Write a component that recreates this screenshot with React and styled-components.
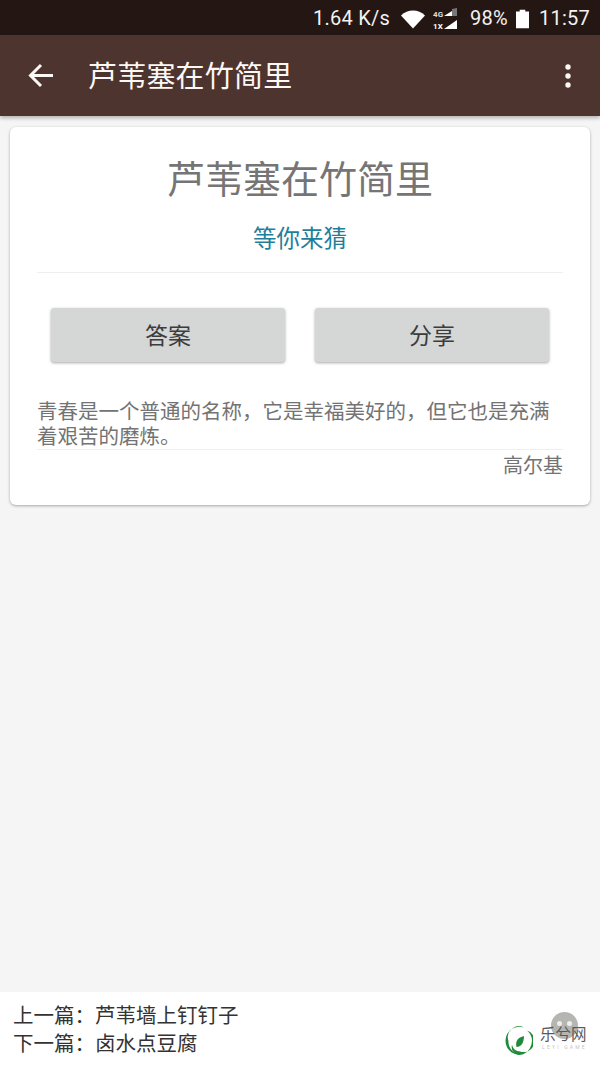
import React from "react";
import styled, { createGlobalStyle } from "styled-components";

const Global = createGlobalStyle`
  html, body { margin: 0; padding: 0; background: #f5f5f5; }
  * { box-sizing: border-box; }
  body { font-family: "Noto Sans CJK SC", "Noto Sans", Roboto, sans-serif; }
`;
const Page = styled.div`
  width: 600px; height: 1067px; display: flex; flex-direction: column; overflow: hidden; background: #f5f5f5;
`;
const StatusBar = styled.div`
  height: 35px; flex: none; background: #241713; color: #f4f1f0;
  display: flex; align-items: center; justify-content: flex-end; padding: 2px 10px 0 0;
  font-family: Roboto, sans-serif; font-size: 20px; letter-spacing: 0.25px;
`;
const StatusText = styled.span`
  margin-right: ${p => p.$gap || 0}px; line-height: 33px;
`;
const StatusIcon = styled.svg`
  display: block; flex: none; margin-right: ${p => p.$gap || 0}px;
`;
const AppBar = styled.header`
  height: 81px; flex: none; background: #4e342e; color: #fbf8f6;
  display: flex; align-items: center; padding: 0 29px 0 28px;
  box-shadow: 0 2px 4px rgba(0,0,0,.28);
  position: relative; z-index: 1;
`;
const BarTitle = styled.h1`
  margin: -4px 0 0 33px; flex: 1; font-size: 29px; font-weight: 400; line-height: 40px; letter-spacing: .2px;
`;
const Main = styled.main`
  flex: 1; padding: 11px 10px 0;
`;
const Card = styled.section`
  height: 378px; background: #fff; border-radius: 6px; box-shadow: 0 1px 3px rgba(0,0,0,.32);
  padding: 23px 27px 0; display: flex; flex-direction: column;
`;
const Title = styled.h2`
  margin: 0; height: 54px; text-align: center; font-size: 38px; line-height: 54px; font-weight: 400; color: #757575;
`;
const Subtitle = styled.div`
  margin-top: 8px; text-align: center; font-size: 23.5px; line-height: 50px; height: 60px; color: #1f7f9b;
`;
const Rule = styled.div`
  height: 1px; flex: none; background: #efefef;
`;
const Buttons = styled.div`
  display: flex; justify-content: space-between; padding: 0 14px; margin-top: 35px;
`;
const Button = styled.button`
  width: 234px; height: 54px; border: 0; border-radius: 3px; background: #d5d6d6; color: #3c3c3c;
  box-shadow: 0 1px 3px rgba(0,0,0,.35); font: inherit; font-size: 23px; padding: 0 0 3px;
`;
const Quote = styled.p`
  margin: 36px 0 0; font-size: 20.5px; line-height: 25px; height: 51px; color: #737373;
`;
const Author = styled.div`
  margin-top: 1px; text-align: right; font-size: 20px; line-height: 28px; color: #737373;
`;
const Footer = styled.footer`
  height: 75px; flex: none; background: #fff; padding: 8px 13px 0; position: relative;
`;
const FooterLine = styled.div`
  font-size: 20.5px; line-height: 28px; color: #333;
`;
const Logo = styled.div`
  position: absolute; left: 503px; top: 0; width: 97px; height: 75px;
`;
const LogoMark = styled.svg`
  position: absolute; left: 0; top: 34px;
`;
const LogoName = styled.div`
  position: absolute; left: 37px; top: 31px; font-size: 15.500px; line-height: 20px; color: #5a5a5a; white-space: nowrap;
`;
const LogoSub = styled.div`
  position: absolute; left: 39px; top: 52px; font-family: Roboto, sans-serif; font-size: 5px; line-height: 7px; color: #c4c4c4; letter-spacing: 2.200px; white-space: nowrap;
`;
const Ghost = styled.div`
  position: absolute; left: 48px; top: 20px; width: 27px; height: 27px; border-radius: 50%;
  background: rgba(120,120,115,.55);
`;
const GhostEye = styled.i`
  position: absolute; top: 9px; left: ${p => p.$x}px; width: 5px; height: 5px; border-radius: 50%; background: #eee;
`;

export default function App() {
  return (
    <Page>
      <Global />
      <StatusBar>
        <StatusText $gap={10}>1.64 K/s</StatusText>
        <StatusIcon $gap={7} width="26" height="20" viewBox="0 0 26 20">
          <path d="M1 6.500C4.500 3 8.500 1.500 13 1.500S21.500 3 25 6.500L13 19.500Z" fill="#fff" />
        </StatusIcon>
        <StatusIcon $gap={12} width="25" height="22" viewBox="0 0 25 22">
          <text x="0" y="9" fontSize="8" fontWeight="700" fill="#ddd" fontFamily="Roboto">4G</text>
          <text x="0" y="21" fontSize="8" fontWeight="700" fill="#fff" fontFamily="Roboto">1X</text>
          <path d="M11 8 19 3V8Z" fill="#fff" />
          <path d="M19 1 24 0V8H19Z" fill="#777" />
          <path d="M11 21 24 12V21Z" fill="#fff" />
        </StatusIcon>
        <StatusText $gap={8}>98%</StatusText>
        <StatusIcon $gap={10} width="13" height="20" viewBox="0 0 14 20">
          <path d="M4 0h6v2h4v18H0V2h4Z" fill="#fff" />
        </StatusIcon>
        <StatusText>11:57</StatusText>
      </StatusBar>
      <AppBar>
        <svg width="27" height="27" viewBox="0 0 27 27" fill="none" stroke="#fbf8f6" strokeWidth="3">
          <path d="M25 13.500H3M13 3 2.500 13.500 13 24" />
        </svg>
        <BarTitle>芦苇塞在竹简里</BarTitle>
        <svg width="6" height="24" viewBox="0 0 6 24" fill="#fbf8f6">
          <circle cx="3" cy="3" r="2.700" />
          <circle cx="3" cy="12" r="2.700" />
          <circle cx="3" cy="21" r="2.700" />
        </svg>
      </AppBar>
      <Main>
        <Card>
          <Title>芦苇塞在竹简里</Title>
          <Subtitle>等你来猜</Subtitle>
          <Rule />
          <Buttons>
            <Button>答案</Button>
            <Button>分享</Button>
          </Buttons>
          <Quote>青春是一个普通的名称，它是幸福美好的，但它也是充满着艰苦的磨炼。</Quote>
          <Rule />
          <Author>高尔基</Author>
        </Card>
      </Main>
      <Footer>
        <FooterLine>上一篇：芦苇墙上钉钉子</FooterLine>
        <FooterLine>下一篇：卤水点豆腐</FooterLine>
        <Logo>
          <Ghost><GhostEye $x={6} /><GhostEye $x={16} /></Ghost>
          <LogoMark width="30" height="30" viewBox="0 0 30 30">
            <path d="M21 1.500A14 14 0 1 0 21 28 12.500 12.500 0 0 1 5.500 15 11 11 0 0 1 21 1.500Z" fill="#1f8a3b" />
            <path d="M24 4.500A14 14 0 0 1 16 29 8 8 0 0 1 9 19 9 9 0 0 0 17 25.500 11 11 0 0 0 24 4.500Z" fill="#1f8a3b" />
            <path d="M21 10C21 17 18 21 13.500 21 12 15 15 11.500 21 10Z" fill="#1f8a3b" />
          </LogoMark>
          <LogoName>乐兮网</LogoName>
          <LogoSub>LEYI GAME</LogoSub>
        </Logo>
      </Footer>
    </Page>
  );
}
